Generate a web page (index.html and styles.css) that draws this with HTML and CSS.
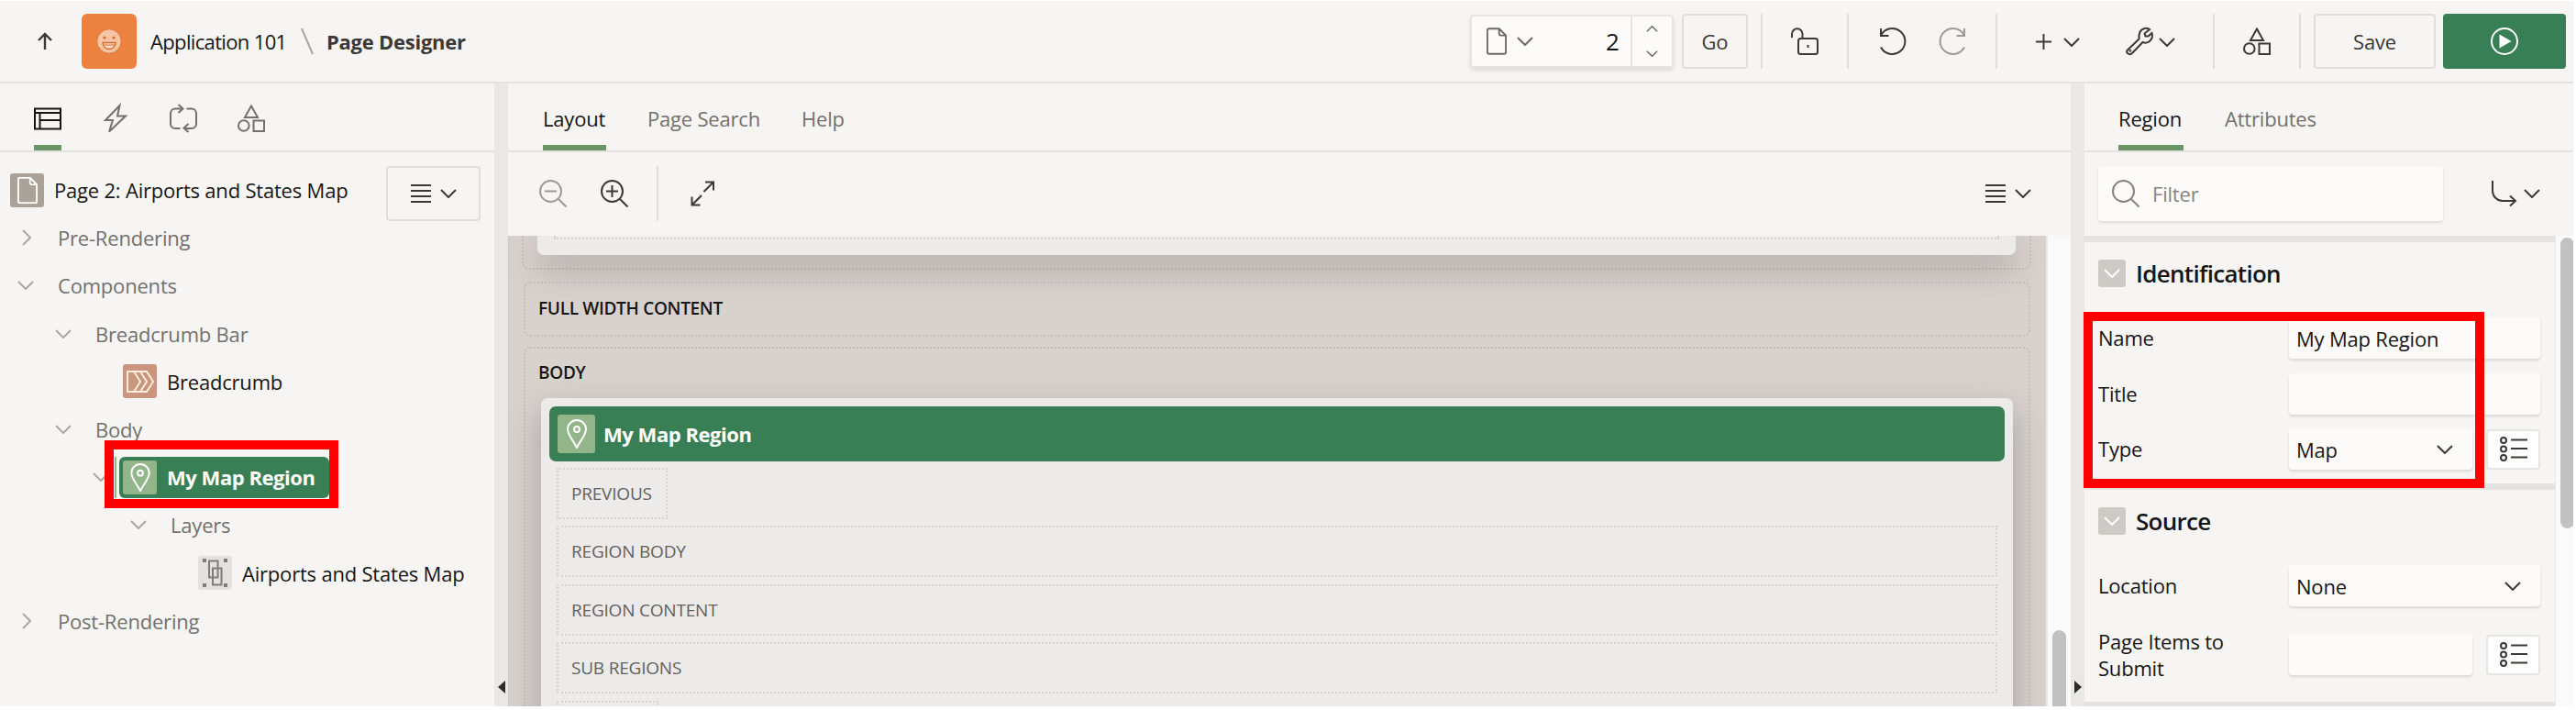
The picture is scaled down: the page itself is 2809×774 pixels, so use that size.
FILE: index.html
```html
<!DOCTYPE html>
<html lang="en">
<head>
<meta charset="utf-8">
<title>Page Designer</title>
<link rel="stylesheet" href="styles.css">
</head>
<body>
<svg class="sprite" aria-hidden="true">
  <symbol id="chev" viewBox="0 0 18 10"><path d="M1 1l8 8 8-8"/></symbol>
  <symbol id="lines" viewBox="0 0 22 20"><path d="M0 1h22M0 7h22M0 13h22M0 19h22"/></symbol>
  <symbol id="shapes" viewBox="0 0 30 30"><path d="M15 1.500L22 14H8zM17.500 17.500h11.500v11.500H17.500z"/><circle cx="6.800" cy="23" r="5.800"/></symbol>
  <symbol id="file" viewBox="0 0 24 32"><path d="M3 1h12l8 8v20a2 2 0 0 1-2 2H3a2 2 0 0 1-2-2V3a2 2 0 0 1 2-2zM15 1v6a2 2 0 0 0 2 2h6"/></symbol>
  <symbol id="pin" viewBox="0 0 22 32"><path d="M11 31C7 23 1 17 1 11a10 10 0 0 1 20 0c0 6-6 12-10 20z"/><circle cx="11" cy="11" r="3"/></symbol>
  <symbol id="list" viewBox="0 0 30 28"><path d="M12 3.500h18M12 13h18M12 22.500h18"/><ellipse cx="4" cy="4" rx="3" ry="3"/><ellipse cx="4" cy="13.500" rx="3" ry="3"/><ellipse cx="4" cy="23" rx="3" ry="3"/></symbol>
</svg>
<div class="app">
  <header class="header">
    <svg class="ic up" viewBox="0 0 16 18"><path d="M8 18V1.500M1 8l7-7 7 7"/></svg>
    <span class="app-icon"><svg viewBox="0 0 28 28" width="28" height="28"><circle cx="14" cy="14" r="13.200" fill="#f6c5a5" stroke="#d9793d"/><circle cx="9" cy="10" r="1.600" fill="#d9682a"/><circle cx="19" cy="10" r="1.600" fill="#d9682a"/><path d="M7 15.500h14a7 7 0 0 1-14 0z" fill="#f9dcc8" stroke="#d9682a" stroke-width="1.300"/><path d="M8 18h12" stroke="#d9682a"/></svg></span>
    <span class="crumb">Application 101</span>
    <svg class="ic slash" viewBox="0 0 14 30"><path d="M1 1l12 28"/></svg>
    <span class="crumb current">Page Designer</span>
    <div class="actions">
      <div class="page-picker">
        <svg class="ic file"><use href="#file"/></svg>
        <svg class="ic chev pick-chev"><use href="#chev"/></svg>
        <span class="page-no">2</span>
        <span class="stepper"><svg class="ic chev small flip"><use href="#chev"/></svg><svg class="ic chev small"><use href="#chev"/></svg></span>
      </div>
      <span class="btn go">Go</span>
      <i class="sep s1"></i>
      <svg class="ic a-lock" viewBox="0 0 30 30"><rect x="8" y="12" width="21" height="17" rx="2.500"/><path d="M1 11V7a5.700 5.700 0 0 1 11.500 0v5M18.500 19v3"/></svg>
      <i class="sep s2"></i>
      <svg class="ic a-undo" viewBox="0 0 30 30"><path d="M2 8.500A14 14 0 1 1 2 21.500M2 1v8h8.500"/></svg>
      <svg class="ic a-redo" viewBox="0 0 30 30"><path d="M28 8.500A14 14 0 1 0 28 21.500M28 1v8h-8.500"/></svg>
      <i class="sep s3"></i>
      <svg class="ic a-plus" viewBox="0 0 20 20"><path d="M10 1v18M1 10h18"/></svg>
      <svg class="ic chev a-c1"><use href="#chev"/></svg>
      <svg class="ic a-wrench" viewBox="0 0 30 30"><path d="M2 24.500L14.500 12.500C14 6 16 2 20.500 1C22.500.6 24.500 1 26 2L20.500 6.500L21.500 9.500L24.500 9.500L28.500 6C29.500 9 29 12 26.500 14.500C24.500 16.500 21 17 18.500 16L7 28C5.500 29.500 3.500 29.500 2 28C.7 26.700.7 25.700 2 24.500z"/><circle cx="4.800" cy="25.300" r=".5"/></svg>
      <svg class="ic chev a-c2"><use href="#chev"/></svg>
      <i class="sep s4"></i>
      <svg class="ic i30 a-shapes"><use href="#shapes"/></svg>
      <i class="sep s5"></i>
      <span class="btn save">Save</span>
      <span class="btn run"><svg width="30" height="30" viewBox="0 0 30 30"><circle cx="15" cy="15" r="14" fill="none" stroke="#fff" stroke-width="2"/><path d="M9.500 7.500l13 7.500-13 7.500z" fill="#fff"/></svg></span>
    </div>
  </header>
  <main class="body">
    <section class="tree-panel">
      <nav class="tabs icon-tabs">
        <span class="tab on"><svg class="ic i30" viewBox="0 0 30 30"><path d="M1 4.500h28v22H1zM1 9h28M6.500 9v17.500M6.500 17h22.500"/></svg></span>
        <span class="tab"><svg class="ic i30" viewBox="0 0 30 30"><path d="M19.500 1L4 17h8L8 29.500 26 12.500h-9z"/></svg></span>
        <span class="tab"><svg class="ic i30" viewBox="0 0 30 30"><path d="M11.500 26H6a5 5 0 0 1-5-5V9.500a5 5 0 0 1 5-5h8M9.500 0l5 4.500-5 4.500M18.500 4.500H24a5 5 0 0 1 5 5V21a5 5 0 0 1-5 5h-8M20.500 21l-5 4.500 5 4.500"/></svg></span>
        <span class="tab"><svg class="ic i30"><use href="#shapes"/></svg></span>
      </nav>
      <div class="tree-wrap">
        <ul class="tree">
          <li class="node dark root"><span class="tile grey"><svg class="ic" width="22" height="31" viewBox="0 0 24 32"><use href="#file"/></svg></span>Page 2: Airports and States Map</li>
          <li class="node l1"><svg class="ic chev shut"><use href="#chev"/></svg>Pre-Rendering</li>
          <li class="node l1"><svg class="ic chev"><use href="#chev"/></svg>Components</li>
          <li class="node l2"><svg class="ic chev"><use href="#chev"/></svg>Breadcrumb Bar</li>
          <li class="node l3 dark"><i class="chev"></i><span class="tile clay"><svg class="ic" width="30" height="24" viewBox="0 0 30 24"><path d="M1 1h21l7 11-7 11H1zM8 1l7 11-7 11M15 1l7 11-7 11"/></svg></span>Breadcrumb</li>
          <li class="node l2"><svg class="ic chev"><use href="#chev"/></svg>Body</li>
          <li class="node l3"><svg class="ic chev"><use href="#chev"/></svg><i class="focus"></i><span class="picked"><span class="tile green"><svg class="ic" width="22" height="31"><use href="#pin"/></svg></span>My Map Region</span></li>
          <li class="node l4"><svg class="ic chev"><use href="#chev"/></svg>Layers</li>
          <li class="node l5 dark"><span class="tile pale"><svg class="ic" width="27" height="31" viewBox="0 0 27 31"><path d="M7 2.500h9.500v18H7zM11 10.500h9.500v18H11z"/><path class="dots" d="M0 0h4v4H0zM23 0h4v4h-4zM0 27h4v4H0zM23 27h4v4h-4z"/></svg></span>Airports and States Map</li>
          <li class="node l1"><svg class="ic chev shut"><use href="#chev"/></svg>Post-Rendering</li>
        </ul>
        <span class="btn menu"><svg class="ic lines"><use href="#lines"/></svg><svg class="ic chev"><use href="#chev"/></svg></span>
      </div>
      <i class="mark mark-tree"></i>
    </section>
    <div class="split"><svg width="8" height="14"><path d="M8 0v14L0 7z"/></svg></div>
    <section class="layout-panel">
      <nav class="tabs text-tabs"><span class="tab on t1">Layout</span><span class="tab t2">Page Search</span><span class="tab">Help</span></nav>
      <div class="toolbar">
        <svg class="ic i30 z-out" viewBox="0 0 30 30"><circle cx="12.500" cy="12.500" r="11.500"/><path d="M20.500 20.500l9 9M6 12.500h13"/></svg>
        <svg class="ic i30" viewBox="0 0 30 30"><circle cx="12.500" cy="12.500" r="11.500"/><path d="M20.500 20.500l9 9M6 12.500h13M12.500 6v13"/></svg>
        <i class="sep"></i>
        <svg class="ic expand" viewBox="0 0 26 28"><path d="M14.500 12L25 1.500M16 1.500h9v9M12 16L1.500 26.500M1.500 17.500v9h9"/></svg>
        <span class="tool-end"><svg class="ic lines"><use href="#lines"/></svg><svg class="ic chev"><use href="#chev"/></svg></span>
      </div>
      <div class="canvas-row">
        <div class="canvas">
          <div class="zone first"><div class="card top-card"><div class="slot"></div></div></div>
          <div class="zone full"><b class="cap">FULL WIDTH CONTENT</b></div>
          <div class="zone main">
            <b class="cap">BODY</b>
            <div class="card region">
              <div class="region-bar"><span class="tile green big"><svg class="ic" width="22" height="32"><use href="#pin"/></svg></span>My Map Region</div>
              <div class="slot prev">PREVIOUS</div>
              <div class="slot">REGION BODY</div>
              <div class="slot">REGION CONTENT</div>
              <div class="slot">SUB REGIONS</div>
              <div class="slot next"></div>
            </div>
          </div>
        </div>
        <div class="scroll"><i class="thumb"></i></div>
      </div>
    </section>
    <div class="split right"><svg width="8" height="14"><path d="M0 0v14l8-7z"/></svg></div>
    <section class="props-panel">
      <nav class="tabs text-tabs prop-tabs"><span class="tab on">Region</span><span class="tab">Attributes</span></nav>
      <div class="filter-row">
        <div class="filter"><svg class="ic i30" viewBox="0 0 30 30"><circle cx="12.500" cy="12.500" r="11.500"/><path d="M20.500 20.500l9 9"/></svg>Filter</div>
        <svg class="ic goto" viewBox="0 0 27 28"><path d="M1 0v11a11 11 0 0 0 11 11h13M20 16.500l6 5.500-6 5.500"/></svg>
        <svg class="ic chev"><use href="#chev"/></svg>
      </div>
      <div class="props-row">
        <div class="props">
          <div class="group ident">
            <h2><span class="fold"><svg class="ic chev"><use href="#chev"/></svg></span>Identification</h2>
            <div class="field"><label>Name</label><span class="input">My Map Region</span></div>
            <div class="field"><label>Title</label><span class="input"></span></div>
            <div class="field"><label>Type</label><span class="input select">Map<svg class="ic chev"><use href="#chev"/></svg></span><span class="pick"><svg class="ic" width="30" height="28"><use href="#list"/></svg></span></div>
          </div>
          <div class="group source">
            <h2><span class="fold"><svg class="ic chev"><use href="#chev"/></svg></span>Source</h2>
            <div class="field"><label>Location</label><span class="input select">None<svg class="ic chev"><use href="#chev"/></svg></span></div>
            <div class="field items"><label>Page Items to Submit</label><span class="input"></span><span class="pick"><svg class="ic" width="30" height="28"><use href="#list"/></svg></span></div>
          </div>
          <div class="group"></div>
        </div>
        <div class="scroll"><i class="thumb"></i></div>
      </div>
      <i class="mark mark-props"></i>
    </section>
  </main>
</div>
</body>
</html>
```
FILE: styles.css
```css
* { box-sizing: border-box; }
body { margin: 0; background: #fff; font: 22px/30px "Open Sans", "Noto Sans", sans-serif; letter-spacing: -.2px; color: #161513; overflow: hidden; }
.sprite { position: absolute; width: 0; height: 0; }
.app { width: 2806px; height: 769px; margin: 1px 3px 4px 0; background: #f6f5f3; display: flex; flex-direction: column; }
.ic { fill: none; stroke: #3b3836; stroke-width: 2; flex: none; overflow: visible; }
.chev { width: 18px; height: 10px; flex: none; }
.lines { width: 22px; height: 20px; }
.i30 { width: 30px; height: 30px; }
.btn { display: flex; align-items: center; justify-content: center; border: 2px solid #dfdedb; border-radius: 4px; height: 60px; color: #3b3836; }
.sep { width: 2px; height: 60px; background: #dfdedb; flex: none; }

.header { height: 90px; border-bottom: 2px solid #e4e2df; display: flex; align-items: center; padding-left: 41px; flex: none; white-space: nowrap; }
.up { width: 16px; height: 18px; stroke-width: 2.400; }
.app-icon { width: 60px; height: 60px; border-radius: 6px; background: #ec8140; display: flex; align-items: center; justify-content: center; margin: 0 15px 0 32px; }
.crumb { letter-spacing: -.65px; }
.slash { width: 14px; height: 30px; stroke: #aaa7a4; margin: 0 14px; }
.current { font-weight: 700; color: #3b3836; letter-spacing: -.25px; }
.crumb:not(.current) { width: 164px; }
.slash { margin-left: 0; }
.actions { margin-left: auto; margin-right: 8px; display: flex; align-items: center; }
.page-picker { width: 222px; height: 58px; background: #fcfbfa; border: 2px solid #e6e5e2; border-radius: 4px; box-shadow: 0 3px 4px rgba(0,0,0,.1); display: flex; align-items: center; padding-left: 16px; }
.file { width: 22px; height: 30px; stroke: #6b6865; }
.page-picker .chev { stroke: #6b6865; }
.pick-chev { margin-left: 11px; }
.page-no { margin-left: 79px; font-size: 26px; }
.stepper { margin-left: auto; height: 100%; width: 45px; border-left: 2px solid #e6e5e2; display: flex; flex-direction: column; align-items: center; justify-content: space-between; padding: 10px 0; }
.small { width: 13px; height: 7px; }
.flip { transform: rotate(180deg); }
.go { width: 72px; margin-left: 9px; }
.s1 { margin: 0 31px 0 14px; }
.a-lock, .a-undo, .a-redo, .a-wrench { width: 30px; height: 30px; }
.s2 { margin: 0 33px 0 31px; }
.a-redo { margin-left: 35px; stroke: #9d9b98; }
.s3 { margin: 0 41px 0 32px; }
.a-plus { width: 19px; height: 19px; }
.a-c1 { margin: 2px 50px 0 12px; }
.a-c2 { margin: 2px 41px 0 6px; }
.a-shapes { margin: 0 31px; }
.save { width: 133px; margin: 0 8px 0 14px; }
.run { width: 134px; background: #397f55; border: 0; }

.body { flex: 1; display: flex; min-height: 0; }
.tabs { height: 75px; border-bottom: 2px solid #e4e2df; display: flex; flex: none; white-space: nowrap; }
.tab { display: flex; align-items: center; color: #73706d; padding-top: 3px; }
.tab .ic { stroke: #73706d; }
.tab.on { color: #161513; border-bottom: 6px solid #6b9464; padding-top: 9px; }
.tab.on .ic { stroke: #161513; }
.icon-tabs { padding-left: 37px; }
.icon-tabs .tab { margin-right: 44px; padding-top: 2px; }
.icon-tabs .tab:nth-child(1) { padding-top: 8px; }

.tree-panel { width: 539px; position: relative; flex: none; }
.tree-wrap { display: flex; padding-top: 15px; }
.tree { list-style: none; margin: 0; padding: 0; width: 421px; white-space: nowrap; flex: none; }
.node { height: 52.200px; display: flex; align-items: center; color: #73706d; }
.dark { color: #161513; }
.node > .chev { stroke: #aaa7a4; margin-right: 26px; }
.shut { transform: translateX(1px) rotate(-90deg) scaleX(1); }
.root { padding-left: 11px; }
.l1 { padding-left: 19px; }
.l2 { padding-left: 60px; }
.l3 { padding-left: 101px; }
.l3 > i.chev { margin-right: 15px; }
.l3 > .ic { margin-right: 6px !important; }
.l4 { padding-left: 142px; }
.l5 { padding-left: 216px; }
.tile { width: 37px; height: 37px; border-radius: 3px; display: flex; align-items: center; justify-content: center; margin-right: 11px; flex: none; }
.grey { background: #aaa198; }
.clay { background: #ca957c; }
.green { background: #92b589; }
.pale { background: #e4e2df; }
.grey .ic, .green .ic { stroke: #fff; }
.clay .ic { stroke: #fbeedd; }
.pale .ic { stroke: #7f7c79; }
.dots { fill: #7f7c79; stroke: none; }
.focus { width: 2px; height: 45px; background: #92b589; margin-right: 3px; }
.picked { width: 229px; height: 45px; border-radius: 6px; background: #397f55; color: #fff; font-weight: 700; letter-spacing: -.45px; display: flex; align-items: center; padding-left: 4px; }
.menu { width: 103px; gap: 10px; }
.mark { position: absolute; border: 10px solid #fe0000; }
.mark-tree { left: 114px; top: 389px; width: 255px; height: 74px; }
.mark-props { left: -1px; top: 249px; width: 437px; height: 192px; }

.split { width: 15px; background: #e9e8e4; display: flex; align-items: flex-end; justify-content: center; padding-bottom: 14px; flex: none; }
.split svg { fill: #2e2b29; }

.layout-panel { width: 1704px; display: flex; flex-direction: column; flex: none; }
.text-tabs { padding-left: 38px; }
.t1, .t2 { margin-right: 45px; }
.t1 { width: 69px; }
.t2 { width: 123px; }
.toolbar { height: 91px; padding: 15px 43px 16px 34px; display: flex; align-items: center; flex: none; }
.z-out { stroke: #9d9b98; margin-right: 37px; }
.toolbar .sep { margin: 0 35px 0 31px; }
.expand { width: 26px; height: 28px; }
.tool-end { margin-left: auto; display: flex; align-items: center; gap: 10px; }
.canvas-row { flex: 1; display: flex; min-height: 0; overflow: hidden; }
.canvas { width: 1677px; background: #d8d2cf; overflow: hidden; flex: none; border-left: 1px solid #cdc8c4; }
.zone { border: 2px dotted #c4bfbc; border-radius: 7px; margin: 0 17px 11px 16px; }
.first { height: 37px; margin: 0 16px 13px 14px; border-top: 0; border-radius: 0 0 8px 8px; }
.card { background: #ecebe9; border-radius: 7px; box-shadow: 0 14px 36px rgba(60,50,46,.32); }
.top-card { height: 21px; border-radius: 0 0 7px 7px; margin: 0 15px; }
.top-card .slot { height: 4px; margin: 0 18px; padding: 0; border-top: 0; }
.full { height: 60px; padding: 12px 14px; }
.cap { display: block; line-height: 30px; font-size: 19px; font-weight: 600; letter-spacing: -.3px; }
.main { height: 460px; padding: 11px 14px; }
.region { margin: 13px 3px 0; height: 420px; padding: 9px; }
.region-bar { height: 60px; background: #397f55; border-radius: 7px; color: #fff; font-weight: 700; letter-spacing: -.45px; display: flex; align-items: center; padding-left: 9px; margin-bottom: 7px; }
.big { width: 41px; height: 42px; margin-right: 9px; }
.slot { border: 2px dotted #d6d4d1; height: 56px; margin: 0 8px 7.400px; padding: 11px 14px; font-size: 19px; color: #63605d; line-height: 30px; }
.prev { width: 121px; }
.next { width: 111px; }
.scroll { flex: 1; background: #fafafa; border-left: 2px solid #e8e8e8; display: flex; }
.thumb { width: 15px; height: 90px; margin: auto 0 -7px 5px; border-radius: 8px; background: #c1c1c1; flex: none; }

.props-panel { flex: 1; position: relative; display: flex; flex-direction: column; min-width: 0; }
.prop-tabs { padding-left: 37px; }
.prop-tabs .tab { margin-right: 45px; }
.prop-tabs .on { width: 71px; }
.filter-row { height: 91px; padding: 15px 35px 16px 15px; display: flex; align-items: center; flex: none; }
.filter { width: 376px; height: 60px; background: #fcfbfa; border-radius: 4px; box-shadow: 0 2px 3px rgba(0,0,0,.1); color: #86837f; display: flex; align-items: center; gap: 14px; padding-left: 15px; flex: none; }
.filter .ic { stroke: #86837f; }
.goto { width: 27px; height: 28px; margin: 0 8px 0 53px; }
.props-row { flex: 1; display: flex; min-height: 0; overflow: hidden; }
.props { width: 513px; flex: none; overflow: hidden; }
.props-row .scroll { border-left-width: 1px; overflow: hidden; }
.props-row .thumb { margin: 2px 0 0 5px; height: 317px; }
.group { border-top: 7px solid #e4e3df; padding: 19px 16px 0 15px; }
.ident { height: 270px; }
.source { height: 238px; }
h2 { margin: 0; font-size: 26px; font-weight: 600; letter-spacing: -.7px; line-height: 30px; display: flex; align-items: center; gap: 11px; }
.fold { width: 30px; height: 30px; border-radius: 3px; background: #cdc9c5; display: flex; align-items: center; justify-content: center; }
.fold .ic { stroke: #fff; }
.field { display: flex; height: 45px; align-items: center; margin-top: 15.500px; }
h2 + .field { margin-top: 33px; }
.field label { width: 208px; flex: none; line-height: 29px; padding-right: 50px; }
.input { flex: 1; height: 45px; border-radius: 4px; background: #fcfbfa; box-shadow: 0 2px 3px rgba(0,0,0,.12); padding: 0 21px 0 8px; display: flex; align-items: center; justify-content: space-between; }
.pick { width: 59px; height: 44px; border: 2px solid #e6e5e2; border-radius: 4px; background: #fff; display: flex; align-items: center; justify-content: center; margin-left: 15px; }
.items { margin-top: 30px; }
```
